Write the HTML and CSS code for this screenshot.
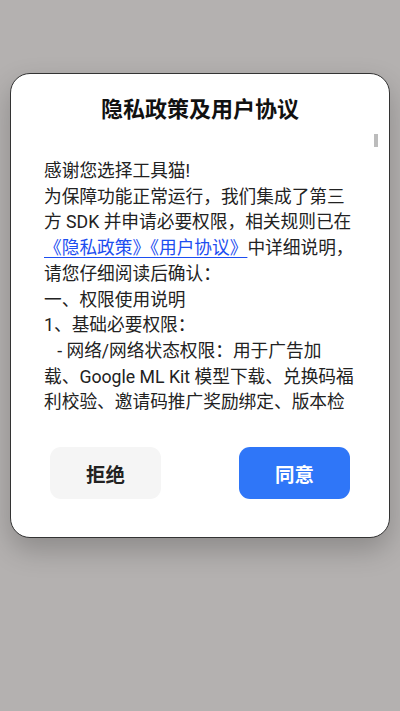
FILE: index.html
```html
<!DOCTYPE html>
<html lang="zh-CN">
<head>
<meta charset="utf-8">
<title>隐私政策及用户协议</title>
<link rel="stylesheet" href="styles.css">
</head>
<body>
<div class="dialog">
  <h1 class="title">隐私政策及用户协议</h1>
  <div class="scroll">
    <div class="content">
      <p>感谢您选择工具猫!</p>
      <p>为保障功能正常运行，我们集成了第三方 SDK 并申请必要权限，相关规则已在<a class="link" href="#">《隐私政策》《用户协议》</a>中详细说明，</p>
      <p>请您仔细阅读后确认：</p>
      <p>一、权限使用说明</p>
      <p>1、基础必要权限：</p>
      <p>&nbsp;&nbsp;&nbsp;- 网络/网络状态权限：用于广告加载、Google ML Kit 模型下载、兑换码福利校验、邀请码推广奖励绑定、版本检测与更新，保障应用正常联网使用。</p>
    </div>
    <div class="thumb"></div>
  </div>
  <div class="actions">
    <button class="btn btn-reject">拒绝</button>
    <button class="btn btn-agree">同意</button>
  </div>
</div>
</body>
</html>
```

FILE: styles.css
```css
html, body {
  margin: 0;
  padding: 0;
}

body {
  background: #b4b1b0;
  font-family: Roboto, "Noto Sans CJK SC", sans-serif;
  color: #222;
  height: 711px;
  overflow: hidden;
}

.dialog {
  margin: 73px 10px 0;
  background: #fff;
  border: 1px solid #333;
  border-radius: 20px;
  box-shadow: 0 12px 28px rgba(0, 0, 0, 0.22);
  display: flex;
  flex-direction: column;
}

.title {
  margin: 21px 0 0;
  font-size: 22px;
  line-height: 30px;
  font-weight: 700;
  text-align: center;
  color: #111;
}

.scroll {
  position: relative;
  margin-top: 8px;
  height: 284px;
  overflow: hidden;
}

.content {
  padding: 26px 33px 0;
  font-size: 17.7px;
  line-height: 25.7px;
  color: #222;
}

.content p {
  margin: 0;
}

.link {
  color: #1c4ef0;
  text-decoration: underline;
  text-underline-offset: 3px;
}

.thumb {
  position: absolute;
  top: 1px;
  right: 11px;
  width: 4px;
  height: 13px;
  background: #bcbcbc;
}

.actions {
  display: flex;
  justify-content: space-around;
  margin-top: 30px;
  padding-bottom: 38px;
}

.btn {
  width: 111px;
  height: 52px;
  border: none;
  border-radius: 11px;
  font-family: Roboto, "Noto Sans CJK SC", sans-serif;
  font-size: 19.5px;
  font-weight: 700;
  padding: 0;
}

.btn-reject {
  background: #f5f5f5;
  color: #222;
}

.btn-agree {
  background: #2f76f8;
  color: #fff;
}
```
